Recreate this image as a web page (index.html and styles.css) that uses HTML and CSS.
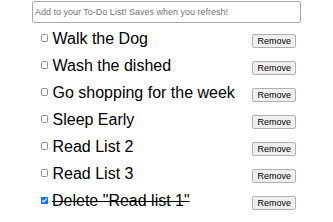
FILE: index.html
```html
<!DOCTYPE html>
<html lang="en">
<head>
  <meta charset="UTF-8">
  <meta name="viewport" content="width=device-width, initial-scale=1.0">
  <title>To-Do List</title>
  <link rel="stylesheet" href="styles.css">
</head>
<body>
    <input type="text" class="to-do-input" placeholder="Add to your To-Do List! Saves when you refresh!">
    <div class="to-do-list">
        <div class="to-do-row">
            <input type="checkbox" class="done">
            <span class="to-do-name">Walk the Dog</span>
            <button class="remove">Remove</button>
        </div>
        <div class="to-do-row">
            <input type="checkbox" class="done">
            <span class="to-do-name">Wash the dished</span>
            <button class="remove">Remove</button>
        </div>
        <div class="to-do-row">
            <input type="checkbox" class="done">
            <span class="to-do-name">Go shopping for the week</span>
            <button class="remove">Remove</button>
        </div>
        <div class="to-do-row">
            <input type="checkbox" class="done">
            <span class="to-do-name">Sleep Early</span>
            <button class="remove">Remove</button>
        </div>
        <div class="to-do-row">
            <input type="checkbox" class="done">
            <span class="to-do-name">Read List 2</span>
            <button class="remove">Remove</button>
        </div>
        <div class="to-do-row">
            <input type="checkbox" class="done">
            <span class="to-do-name">Read List 3</span>
            <button class="remove">Remove</button>
        </div>
        <div class="to-do-row">
            <input type="checkbox" class="done" checked>
            <span class="to-do-name crossed">Delete "Read list 1"</span>
            <button class="remove">Remove</button>
        </div>
    </div>
</body>
</html>
```

FILE: styles.css
```css
body {
    margin: 0;
    font-family: "Liberation Sans", Arial, Helvetica, sans-serif;
    background-color: white;
    color: black;
}

.to-do-input {
    display: block;
    box-sizing: border-box;
    width: 269px;
    height: 22px;
    margin: 1px 0 0 32px;
    padding: 0 2px;
    border: 1px solid #a9a9a9;
    border-radius: 2px;
    font-family: "Liberation Sans", Arial, Helvetica, sans-serif;
    font-size: 9px;
}
.to-do-input::placeholder {
    color: #757575;
}

.to-do-list {
    width: 296px;
    box-sizing: border-box;
    padding-left: 40px;
    margin-top: 1.5px;
}

.to-do-row {
    display: flex;
    align-items: baseline;
    height: 27px;
    line-height: 27px;
    font-size: 16px;
}

.done {
    width: 13px;
    height: 13px;
    margin: 0 1.5px 0 -2.5px;
    align-self: center;
    transform: scale(0.56);
}
.done:not(:checked) {
    appearance: none;
    box-sizing: border-box;
    width: 7.5px;
    height: 7.5px;
    margin: 0 4.5px 0 0.5px;
    border: 1px solid #8f8f8f;
    border-radius: 1.5px;
    background-color: white;
    transform: none;
}

.crossed {
    text-decoration: line-through;
}

.remove {
    margin-left: auto;
    font-family: "Liberation Sans", Arial, Helvetica, sans-serif;
    font-size: 9px;
    line-height: 10px;
    padding: 1px 4px;
    border: 1px solid #b0b0b0;
    border-radius: 2px;
    background-color: #efefef;
    color: black;
}
```
